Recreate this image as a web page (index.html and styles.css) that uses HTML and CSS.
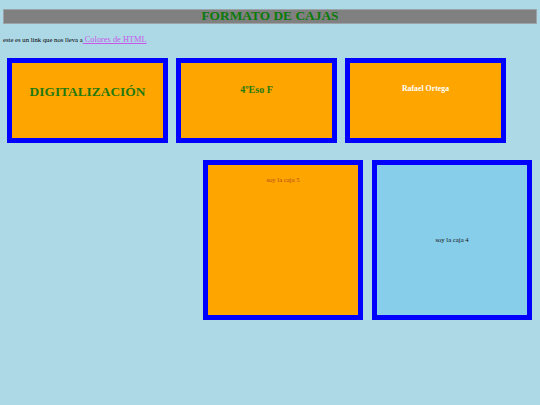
FILE: index.html
```html
<!DOCTYPE html>
<html lang="es">
<head>
<meta charset="utf-8">
<title>Formato de cajas</title>
<link rel="stylesheet" href="styles.css">
</head>
<body>
<h1 class="titulo">FORMATO DE CAJAS</h1>
<p class="intro">este es un link que nos lleva a<a class="enlace" href="#"> Colores de HTML</a></p>
<div class="fila fila-arriba">
  <div class="caja"><h2 class="t-grande">DIGITALIZACIÓN</h2></div>
  <div class="caja"><h2 class="t-medio">4ºEso F</h2></div>
  <div class="caja"><h3 class="t-peq">Rafael Ortega</h3></div>
</div>
<div class="fila fila-abajo">
  <div class="caja grande naranja"><p class="caja5">soy la caja 5</p></div>
  <div class="caja grande celeste"><p class="caja4">soy la caja 4</p></div>
</div>
</body>
</html>
```
FILE: styles.css
```css
html, body {
  margin: 0;
  background: #add8e6;
}
body {
  padding: 9px 3px 0;
  font-family: "Liberation Serif", "Times New Roman", serif;
  font-size: 6.7px;
  color: #000;
}
.titulo {
  margin: 0;
  height: 11px;
  border: 1px solid #9aa4a8;
  background: #808080;
  color: #0a7a0a;
  font-size: 13.4px;
  font-weight: bold;
  line-height: 11px;
  padding-bottom: 2px;
  box-sizing: content-box;
  text-align: center;
}
.intro {
  margin: 11px 0 0;
  height: 10px;
  line-height: 10px;
  font-size: 6.7px;
}
.enlace {
  font-size: 8.4px;
  line-height: 10px;
  color: #c858ea;
  text-decoration: underline;
}
.fila {
  display: flex;
}
.fila-arriba {
  margin: 13px 0 0 4px;
  gap: 8px;
}
.fila-abajo {
  margin: 17px 5px 0 0;
  gap: 9px;
  justify-content: flex-end;
}
.caja {
  width: 151px;
  height: 75px;
  border: 5px solid #0000ff;
  background: #ffa500;
  text-align: center;
}
.caja h2, .caja h3 {
  margin: 22px 0 0;
  line-height: 1;
  font-weight: bold;
}
.t-grande {
  font-size: 13.4px;
  color: #1f7a10;
}
.t-medio {
  font-size: 10.05px;
  color: #1f7a10;
}
.t-peq {
  font-size: 7.84px;
  color: #ffffff;
}
.grande {
  width: 150px;
  height: 150px;
}
.naranja {
  background: #ffa500;
}
.celeste {
  background: #87ceeb;
  display: flex;
  align-items: center;
  justify-content: center;
}
.caja5 {
  margin: 12px 0 0;
  line-height: 1;
  color: #b04a1c;
}
.caja4 {
  margin: 0;
  line-height: 1;
  color: #111;
}
```
